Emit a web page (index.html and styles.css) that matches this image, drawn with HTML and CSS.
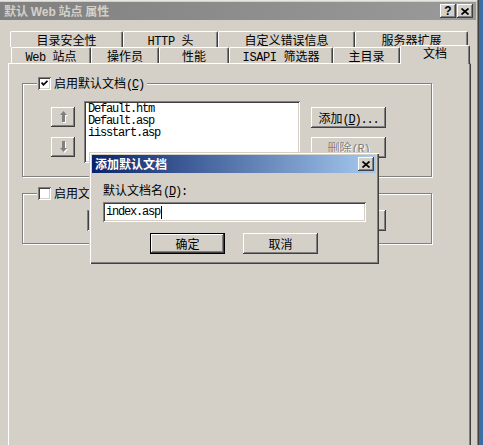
FILE: index.html
```html
<!DOCTYPE html>
<html lang="zh-CN">
<head>
    <meta charset="UTF-8">
    <meta name="viewport" content="width=device-width, initial-scale=1.0">
    <title>默认 Web 站点 属性</title>
    <link rel="stylesheet" href="styles.css">
</head>
<body>
<div class="window">
    <div class="titlebar">
        <span class="title">默认 <span class="latin">Web</span> 站点 属性</span>
        <div class="cap-buttons">
            <span class="cap-btn help">?</span>
            <span class="cap-btn">
                <svg width="8" height="7" viewBox="0 0 8 7"><path d="M0.5 0.5 L7.5 6.5 M7.5 0.5 L0.5 6.5" stroke="#000" stroke-width="1.7"/></svg>
            </span>
        </div>
    </div>

    <div class="tabstrip">
        <div class="tab-row back-row">
            <div class="tab">目录安全性</div>
            <div class="tab"><span class="mono tab-latin">HTTP </span>头</div>
            <div class="tab">自定义错误信息</div>
            <div class="tab">服务器扩展</div>
        </div>
        <div class="tab-row front-row">
            <div class="tab"><span class="mono tab-latin">Web </span>站点</div>
            <div class="tab">操作员</div>
            <div class="tab">性能</div>
            <div class="tab"><span class="mono tab-latin">ISAPI </span>筛选器</div>
            <div class="tab">主目录</div>
            <div class="tab selected">文档</div>
        </div>
    </div>

    <div class="panel">
        <!-- default documents -->
        <div class="group group-docs">
            <div class="legend">
                <span class="checkbox checked">
                    <svg width="7" height="7" viewBox="0 0 7 7"><path d="M0.5 2.5 L2.5 4.8 L6.5 0.8" stroke="#000" stroke-width="1.8" fill="none"/></svg>
                </span>
                <span>启用默认文档<span class="mono">(<u>C</u>)</span></span>
            </div>
            <div class="group-body">
                <div class="arrows">
                    <div class="btn arrow-btn">
                        <svg width="9" height="12" viewBox="0 0 9 12"><path d="M4.5 1 L8 5 L6 5 L6 12 L3 12 L3 5 L1 5 Z" fill="#fff" transform="translate(1 0)"/><path d="M4.5 0 L8 4 L6 4 L6 11 L3 11 L3 4 L1 4 Z" fill="#808080"/></svg>
                    </div>
                    <div class="btn arrow-btn">
                        <svg width="9" height="12" viewBox="0 0 9 12"><path d="M4.5 12 L8 8 L6 8 L6 1 L3 1 L3 8 L1 8 Z" fill="#fff" transform="translate(1 0)"/><path d="M4.5 11 L8 7 L6 7 L6 0 L3 0 L3 7 L1 7 Z" fill="#808080"/></svg>
                    </div>
                </div>
                <div class="listbox mono">
                    <div>Default.htm</div>
                    <div>Default.asp</div>
                    <div>iisstart.asp</div>
                </div>
                <div class="side-buttons">
                    <div class="btn">添加<span class="mono">(<u>D</u>)...</span></div>
                    <div class="btn disabled">删除<span class="mono">(<u>R</u>)</span></div>
                </div>
            </div>
        </div>

        <!-- document footer -->
        <div class="group group-footer">
            <div class="legend">
                <span class="checkbox"></span>
                <span>启用文档页脚<span class="mono">(<u>O</u>)</span></span>
            </div>
            <div class="group-body">
                <div class="textbox wide"></div>
                <div class="btn">浏览<span class="mono">(<u>B</u>)...</span></div>
            </div>
        </div>
    </div>

    <div class="dialog">
        <div class="dlg-caption">
            <span class="dlg-title">添加默认文档</span>
            <span class="cap-btn">
                <svg width="8" height="7" viewBox="0 0 8 7"><path d="M0.5 0.5 L7.5 6.5 M7.5 0.5 L0.5 6.5" stroke="#000" stroke-width="1.7"/></svg>
            </span>
        </div>
        <div class="dlg-body">
            <div class="dlg-label">默认文档名<span class="mono">(<u>D</u>):</span></div>
            <div class="textbox dlg-input"><span class="mono">index.asp</span><span class="caret"></span></div>
            <div class="dlg-buttons">
                <div class="btn default">确定</div>
                <div class="btn">取消</div>
            </div>
        </div>
    </div>
</div>
</body>
</html>
```

FILE: styles.css
```css
body {
    margin: 0;
    background: #3a6ea5;
    font-family: "Noto Sans CJK SC", sans-serif;
    font-size: 12px;
    color: #000;
    overflow: hidden;
}
.mono {
    font-family: "Liberation Mono", "Noto Sans CJK SC", monospace;
    letter-spacing: -1.2px;
}
.tab-latin {
    letter-spacing: -0.4px;
    white-space: pre;
}
.window {
    position: relative;
    width: 479px;
    height: 445px;
    background: #d4d0c8;
    overflow: hidden;
    box-shadow: inset -1px 0 #404040, inset -2px 0 #808080, inset 0 1px #e8e6e0;
}

/* title bar */
.titlebar {
    margin: 2px 3px 0 0;
    height: 18px;
    padding: 0 3px 0 4px;
    display: flex;
    align-items: center;
    justify-content: space-between;
    background: linear-gradient(to right, #808080, #9a9a9a);
}
.title {
    color: #d4d0c8;
    font-weight: bold;
    line-height: 18px;
}
.title .latin {
    font-family: "Liberation Sans", sans-serif;
}
.cap-buttons {
    display: flex;
    gap: 1px;
}
.cap-btn {
    width: 16px;
    height: 14px;
    box-sizing: border-box;
    background: #d4d0c8;
    display: flex;
    align-items: center;
    justify-content: center;
    box-shadow: inset -1px -1px #404040, inset 1px 1px #fff, inset -2px -2px #808080;
}
.cap-btn.help {
    font-family: "Liberation Sans", sans-serif;
    font-weight: bold;
    font-size: 12px;
    line-height: 14px;
}

/* tabs */
.tabstrip {
    margin-top: 11px;
}
.tab-row {
    display: grid;
    height: 16px;
}
.back-row {
    margin-left: 10px;
    grid-template-columns: 113px 95px 137px 113px;
}
.front-row {
    margin-left: 11px;
    grid-template-columns: 80px 68px 70px 104px 67px 70px;
}
.tab {
    box-sizing: border-box;
    height: 16px;
    line-height: 15px;
    text-align: center;
    background: #d4d0c8;
    border-top: 1px solid #fff;
    border-left: 1px solid #fff;
    border-right: 1px solid #404040;
    border-radius: 2px 2px 0 0;
    box-shadow: inset -1px 0 #808080;
}
.tab.selected {
    position: relative;
    z-index: 2;
    height: 19px;
    margin-top: -2px;
    line-height: 14px;
}

/* page panel */
.panel {
    box-sizing: border-box;
    margin-left: 8px;
    width: 463px;
    height: 400px;
    padding-top: 1px;
    border-top: 1px solid #fff;
    border-left: 1px solid #fff;
    border-right: 1px solid #404040;
    box-shadow: inset -1px 0 #808080;
}
.group {
    position: relative;
    box-sizing: border-box;
    margin-left: 13px;
    width: 410px;
    border: 1px solid #808080;
    box-shadow: inset 1px 1px #fff, 1px 1px #fff;
}
.group-docs {
    margin-top: 18px;
    height: 94px;
}
.group-footer {
    margin-top: 16px;
    height: 51px;
}
.legend {
    position: absolute;
    top: -7px;
    left: 14px;
    padding: 0 3px 0 1px;
    display: flex;
    align-items: center;
    gap: 3px;
    height: 13px;
    line-height: 13px;
    background: #d4d0c8;
}
.checkbox {
    width: 13px;
    height: 13px;
    box-sizing: border-box;
    background: #fff;
    display: flex;
    align-items: center;
    justify-content: center;
    box-shadow: inset 1px 1px #808080, inset -1px -1px #fff, inset 2px 2px #404040, inset -2px -2px #d4d0c8;
}
.group-body {
    display: flex;
    align-items: flex-start;
}
.group-docs .group-body {
    padding: 17px 0 0 28px;
}
.group-footer .group-body {
    padding: 16px 0 0 64px;
    gap: 11px;
}

/* buttons */
.btn {
    box-sizing: border-box;
    width: 75px;
    height: 21px;
    line-height: 21px;
    text-align: center;
    background: #d4d0c8;
    box-shadow: inset -1px -1px #404040, inset 1px 1px #fff, inset -2px -2px #808080;
}
.btn.disabled {
    color: #808080;
    text-shadow: 1px 1px #fff;
}
.btn.default {
    border: 1px solid #000;
    line-height: 19px;
}
.arrows {
    margin-top: 6px;
    display: flex;
    flex-direction: column;
    gap: 10px;
}
.arrow-btn {
    width: 24px;
    height: 20px;
    display: flex;
    align-items: center;
    justify-content: center;
}
.listbox {
    box-sizing: border-box;
    margin-left: 9px;
    width: 216px;
    height: 62px;
    padding: 2px 4px;
    line-height: 12px;
    background: #fff;
    box-shadow: inset 1px 1px #808080, inset -1px -1px #fff, inset 2px 2px #404040, inset -2px -2px #d4d0c8;
}
.side-buttons {
    margin: 6px 0 0 11px;
    display: flex;
    flex-direction: column;
    gap: 9px;
}
.textbox {
    box-sizing: border-box;
    height: 21px;
    background: #fff;
    box-shadow: inset 1px 1px #808080, inset -1px -1px #fff, inset 2px 2px #404040, inset -2px -2px #d4d0c8;
}
.textbox.wide {
    width: 213px;
}

/* add default document dialog */
.dialog {
    position: absolute;
    left: 89px;
    top: 152px;
    width: 290px;
    height: 112px;
    box-sizing: border-box;
    padding: 3px;
    background: #d4d0c8;
    box-shadow: inset 1px 1px #d4d0c8, inset 2px 2px #fff, inset -1px -1px #404040, inset -2px -2px #808080;
}
.dlg-caption {
    height: 18px;
    padding: 0 2px 0 3px;
    display: flex;
    align-items: center;
    justify-content: space-between;
    background: linear-gradient(to right, #0a246a, #a6caf0);
}
.dlg-title {
    color: #fff;
    font-weight: bold;
    line-height: 18px;
}
.dlg-body {
    padding-left: 11px;
}
.dlg-label {
    margin-top: 10px;
    line-height: 14px;
}
.dlg-input {
    margin-top: 3px;
    width: 263px;
    height: 20px;
    padding-left: 3px;
    display: flex;
    align-items: center;
}
.caret {
    width: 1px;
    height: 13px;
    margin-left: 1px;
    background: #000;
}
.dlg-buttons {
    margin: 11px 0 0 -11px;
    display: flex;
    justify-content: center;
    gap: 18px;
}
```
